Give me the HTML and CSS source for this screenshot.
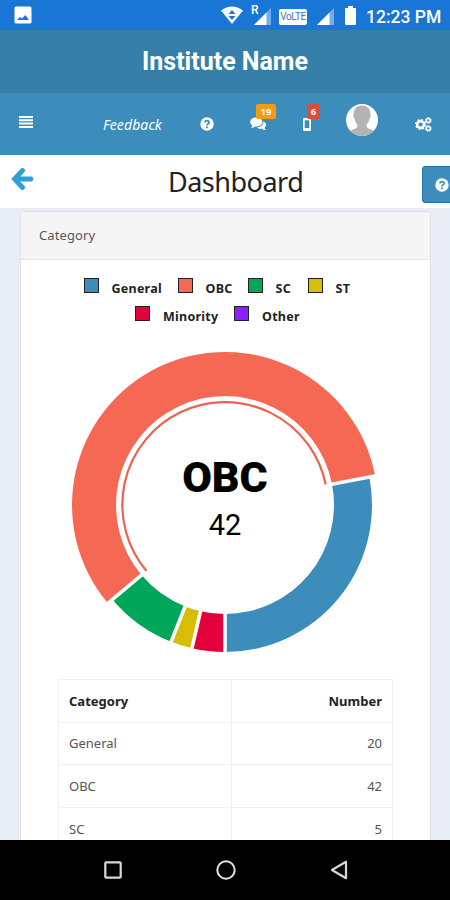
FILE: index.html
```html
<!DOCTYPE html>
<html lang="en">
<head>
    <meta charset="UTF-8">
    <meta name="viewport" content="width=device-width, initial-scale=1.0">
    <title>Dashboard</title>
    <link rel="stylesheet" href="styles.css">
</head>
<body>
    <div class="status-bar">
        <svg class="status-photo" width="18" height="18" viewBox="0 0 18 18">
            <rect x="0.5" y="0.5" width="17" height="17" rx="1.5" fill="#fff"/>
            <path d="M3 14l3-3 2 1.500L11.500 9 15 14z" fill="#1976d2"/>
        </svg>
        <svg class="status-wifi" width="22" height="18" viewBox="0 0 22 18">
            <path d="M0 4.500Q11-3.500 22 4.500L11 18z" fill="#fff"/>
            <path d="M11 4l3.500 4h-7zM11 14l-3.500-4h7z" fill="#1976d2"/>
        </svg>
        <div class="roaming">
            <span class="roaming-letter">R</span>
            <svg width="17" height="17" viewBox="0 0 17 17">
                <path d="M17 0v17H0z" fill="#75acec"/>
                <path d="M12.500 4.500V17H0z" fill="#fff"/>
            </svg>
        </div>
        <span class="volte">VoLTE</span>
        <svg class="status-signal" width="17" height="17" viewBox="0 0 17 17">
            <path d="M17 0v17H0z" fill="#75acec"/>
            <path d="M12.500 4.500V17H0z" fill="#fff"/>
        </svg>
        <svg class="status-battery" width="11" height="19" viewBox="0 0 11 19">
            <path d="M3 0h5v2h2q1 0 1 1v15q0 1-1 1H1q-1 0-1-1V3q0-1 1-1h2z" fill="#fff"/>
        </svg>
        <span class="clock">12:23 PM</span>
    </div>

    <div class="logo">Institute Name</div>

    <div class="navbar">
        <svg class="nav-menu" width="14" height="12" viewBox="0 0 14 12">
            <path d="M0 1h14M0 4.300h14M0 7.600h14M0 10.900h14" stroke="#fff" stroke-width="2"/>
        </svg>
        <span class="feedback">Feedback</span>
        <svg class="nav-help" width="14" height="14" viewBox="0 0 14 14">
            <circle cx="7" cy="7" r="6.700" fill="#fff"/>
            <path d="M5 5.500Q5 3.600 7 3.600T9 5.400Q9 6.400 7.900 7T7 8.500" fill="none" stroke="#3c8dbc" stroke-width="1.800"/>
            <rect x="6.100" y="9.500" width="1.800" height="1.700" fill="#3c8dbc"/>
        </svg>
        <div class="nav-comments">
            <svg width="17" height="14" viewBox="0 0 17 14">
                <path d="M13.500 4.500Q16.500 6 16 8.500Q15.700 10 14.500 10.800Q14.800 12.300 16 13Q13.500 13.200 12 11.700Q8.800 12.200 6.800 10.500Q13 10 13.500 4.500z" fill="#fff"/>
                <ellipse cx="6.300" cy="5" rx="6.200" ry="4.500" fill="#fff"/>
                <path d="M2.500 8Q2.300 10 .8 11Q4 11 5.500 9z" fill="#fff"/>
            </svg>
            <span class="badge badge-orange">19</span>
        </div>
        <div class="nav-phone">
            <svg width="8" height="13" viewBox="0 0 8 13">
                <rect x="0" y="0" width="8" height="13" rx="1.300" fill="#fff"/>
                <rect x="1.700" y="2.300" width="4.600" height="7.700" fill="#3c8dbc"/>
            </svg>
            <span class="badge badge-red">6</span>
        </div>
        <svg class="nav-avatar" width="32" height="32" viewBox="0 0 32 32">
            <clipPath id="round"><circle cx="16" cy="16" r="16"/></clipPath>
            <g clip-path="url(#round)">
                <rect width="32" height="32" fill="#fff"/>
                <path d="M16 1.500C10 1.500 7.500 5.500 7.700 10.500C7 10.800 7 13 8.600 15C9 18 10.500 19.500 11.500 20.500C11.500 23.500 10.500 24.500 7 25.500C4.500 26.200 3 28 2 32H30C29 28 27.500 26.200 25 25.500C21.500 24.500 20.500 23.500 20.500 20.500C21.500 19.500 23 18 23.400 15C25 13 25 10.800 24.300 10.500C24.500 5.500 22 1.500 16 1.500z" fill="#b3b3b3"/>
            </g>
        </svg>
        <svg class="nav-cogs" width="17" height="15" viewBox="0 0 17 15">
            <g fill="none" stroke="#fff">
                <circle cx="5.600" cy="7.500" r="3.400" stroke-width="2.600"/>
                <circle cx="5.600" cy="7.500" r="4.900" stroke-width="1.400" stroke-dasharray="1.925"/>
                <circle cx="13.300" cy="3.500" r="2" stroke-width="1.600"/>
                <circle cx="13.300" cy="3.500" r="2.900" stroke-width=".9" stroke-dasharray="1.140"/>
                <circle cx="13.300" cy="11.500" r="2" stroke-width="1.600"/>
                <circle cx="13.300" cy="11.500" r="2.900" stroke-width=".9" stroke-dasharray="1.140"/>
            </g>
        </svg>
    </div>

    <div class="title-bar">
        <svg class="back" width="22" height="22" viewBox="0 0 22 22">
            <path d="M11.500 2.500L3.500 11l8 8.500M4 11h16" fill="none" stroke="#2f9fd8" stroke-width="4.800" stroke-linecap="round"/>
        </svg>
        <h1>Dashboard</h1>
        <div class="help-btn">
            <svg width="14" height="14" viewBox="0 0 14 14">
                <circle cx="7" cy="7" r="6.700" fill="#fff"/>
                <path d="M5 5.500Q5 3.600 7 3.600T9 5.400Q9 6.400 7.900 7T7 8.500" fill="none" stroke="#3c8dbc" stroke-width="1.800"/>
                <rect x="6.100" y="9.500" width="1.800" height="1.700" fill="#3c8dbc"/>
            </svg>
        </div>
    </div>

    <div class="content">
        <div class="panel">
            <div class="panel-heading">Category</div>
            <div class="legend">
                <div class="legend-row">
                    <span class="swatch general"></span><span class="label w-general">General</span>
                    <span class="swatch obc"></span><span class="label w-obc">OBC</span>
                    <span class="swatch sc"></span><span class="label w-sc">SC</span>
                    <span class="swatch st"></span><span class="label w-st">ST</span>
                </div>
                <div class="legend-row">
                    <span class="swatch minority"></span><span class="label w-minority">Minority</span>
                    <span class="swatch other"></span><span class="label w-other">Other</span>
                </div>
            </div>
            <svg class="donut" width="310" height="310" viewBox="-155 -155 310 310">
                <path d="M0 147A147 147 0 0 0 144.300-28L107-20.800A109 109 0 0 1 0 109z" fill="#3c8dbc"/>
                <path d="M150.200-29.200A153 153 0 1 0-117.200 98.300L-83.500 70.100A109 109 0 1 1 107-20.800z" fill="#f56954"/>
                <path d="M-112.600 94.500A147 147 0 0 0-53.900 136.800L-39.900 101.400A109 109 0 0 1-83.500 70.100z" fill="#00a65a"/>
                <path d="M-53.900 136.800A147 147 0 0 0-33.100 143.200L-24.500 106.200A109 109 0 0 1-39.900 101.400z" fill="#d8bd06"/>
                <path d="M-33.100 143.200A147 147 0 0 0 0 147V109A109 109 0 0 1-24.500 106.200z" fill="#e4003a"/>
                <!-- gaps between the slices -->
                <path d="M0 106V155M104-20.200L152.200-29.600M-81.200 68.100L-118.700 99.600M-38.800 98.600L-56.800 144.200M-23.800 103.300L-34.900 151" stroke="#fff" stroke-width="3.600"/>
                <path d="M100.700-20.500A102.700 102.700 0 1 0-78.600 65.900" fill="none" stroke="#f0604e" stroke-width="2.200"/>
                <text class="donut-name" x="0" y="-13" text-anchor="middle">OBC</text>
                <text class="donut-value" x="0" y="30" text-anchor="middle">42</text>
            </svg>
            <table>
                <tr><th>Category</th><th>Number</th></tr>
                <tr><td>General</td><td>20</td></tr>
                <tr><td>OBC</td><td>42</td></tr>
                <tr><td>SC</td><td>5</td></tr>
            </table>
        </div>
    </div>

    <div class="android-nav">
        <svg width="18" height="18" viewBox="0 0 18 18"><rect x="1.300" y="1.300" width="15.400" height="15.400" rx="1" fill="none" stroke="#d8d8d8" stroke-width="2.200"/></svg>
        <svg width="20" height="20" viewBox="0 0 20 20"><circle cx="10" cy="10" r="8.700" fill="none" stroke="#e4e4e4" stroke-width="2"/></svg>
        <svg width="18" height="20" viewBox="0 0 18 20"><path d="M16 1.800v16.400L2 10z" fill="none" stroke="#d8d8d8" stroke-width="2.200" stroke-linejoin="round"/></svg>
    </div>
</body>
</html>
```

FILE: styles.css
```css
* {
    box-sizing: border-box;
}
body {
    margin: 0;
    width: 450px;
    height: 900px;
    overflow: hidden;
    display: flex;
    flex-direction: column;
    font-family: 'Noto Sans', sans-serif;
    font-size: 13px;
    color: #555;
    background: #e9edf5;
}
svg {
    display: block;
    flex: none;
}
.status-bar {
    flex: none;
    height: 30px;
    display: flex;
    align-items: center;
    background: #1976d6;
    color: #fff;
    font-family: Roboto, sans-serif;
}
.status-photo {
    margin-left: 14px;
}
.status-wifi {
    margin-left: 189px;
}
.roaming {
    position: relative;
    margin-left: 11px;
    padding-top: 2px;
}
.roaming-letter {
    position: absolute;
    left: -3px;
    top: -1px;
    font-size: 12px;
    line-height: 11px;
    font-weight: 500;
}
.volte {
    flex: none;
    width: 28px;
    height: 16px;
    margin-left: 8px;
    margin-top: 3px;
    border-radius: 2px;
    background: #fff;
    color: #3c78bd;
    font-size: 10px;
    line-height: 16px;
    letter-spacing: -0.4px;
    text-align: center;
}
.status-signal {
    margin-left: 10px;
    margin-top: 2px;
}
.status-battery {
    margin-left: 11px;
}
.clock {
    flex: none;
    margin-left: 10px;
    margin-top: 3px;
    font-size: 17.5px;
    font-weight: 500;
    white-space: nowrap;
}
.logo {
    flex: none;
    height: 63px;
    line-height: 63px;
    background: #367fa9;
    color: #fff;
    font-family: Roboto, sans-serif;
    font-size: 25px;
    font-weight: 700;
    text-align: center;
}
.navbar {
    flex: none;
    height: 62px;
    display: flex;
    align-items: center;
    background: #3c8dbc;
    color: #fff;
}
.nav-menu {
    margin-left: 19px;
    margin-bottom: 4px;
}
.feedback {
    width: 60px;
    margin-left: 70px;
    font-size: 14px;
    font-style: italic;
    letter-spacing: 0.1px;
    white-space: nowrap;
}
.nav-help {
    margin-left: 37px;
}
.nav-comments {
    position: relative;
    margin-left: 36px;
}
.nav-phone {
    position: relative;
    margin-left: 36px;
}
.badge {
    position: absolute;
    height: 15px;
    line-height: 15px;
    border-radius: 2px;
    color: #fff;
    font-size: 9.5px;
    font-weight: 700;
    text-align: center;
}
.badge-orange {
    left: 6px;
    top: -13px;
    width: 20px;
    background: #f39c12;
}
.badge-red {
    left: 4px;
    top: -14px;
    width: 13px;
    background: #dd4b39;
}
.nav-avatar {
    margin-left: 35px;
    margin-bottom: 8px;
}
.nav-cogs {
    margin-left: 37px;
}
.title-bar {
    flex: none;
    height: 53px;
    display: flex;
    align-items: center;
    background: #fff;
}
.back {
    margin-left: 11px;
    margin-bottom: 6px;
}
.title-bar h1 {
    flex: none;
    width: 136px;
    margin: 0 0 0 135px;
    color: #222;
    font-size: 27px;
    font-weight: 400;
    line-height: 40px;
    letter-spacing: -0.5px;
    white-space: nowrap;
}
.help-btn {
    flex: none;
    width: 40px;
    height: 37px;
    margin-left: 118px;
    margin-top: 6px;
    padding: 11px 12px;
    border: 1px solid #20729f;
    border-radius: 3px;
    background: #3c8dbc;
}
.content {
    flex: 1;
    min-height: 0;
    overflow: hidden;
    padding: 3px 19px 0 20px;
}
.panel {
    height: 700px;
    border: 1px solid #dfe1e6;
    border-radius: 4px;
    background: #fff;
}
.panel-heading {
    height: 48px;
    padding-left: 18px;
    line-height: 47px;
    letter-spacing: 0.1px;
    background: #f5f5f5;
    border-bottom: 1px solid #e3e3e3;
    border-radius: 4px 4px 0 0;
}
.legend {
    padding: 18px 16px 0 0;
}
.legend-row {
    height: 28px;
    display: flex;
    justify-content: center;
    color: #222;
    font-size: 12.5px;
    font-weight: 700;
    letter-spacing: 0.25px;
}
.swatch {
    width: 15px;
    height: 15px;
    margin-right: 13px;
    border: 1px solid #222;
}
.label {
    margin-right: 15px;
    line-height: 22px;
    white-space: nowrap;
}
.label:last-child {
    margin-right: 0;
}
.general { background: #3c8dbc; }
.obc { background: #f56954; }
.sc { background: #00a65a; }
.st { background: #d8bd06; }
.minority { background: #e4003a; }
.other { background: #8a1fff; }
.w-general { width: 51px; }
.w-obc { width: 27px; }
.w-sc { width: 17px; }
.w-st { width: 16px; }
.w-minority { width: 56px; }
.w-other { width: 38px; }
.donut {
    margin: 16px 0 0 49px;
}
.donut-name {
    font-family: Roboto, sans-serif;
    font-size: 43px;
    font-weight: 900;
    fill: #000;
}
.donut-value {
    font-family: Roboto, sans-serif;
    font-size: 29px;
    fill: #000;
}
table {
    width: 335px;
    margin: 19px 0 0 37px;
    border-collapse: collapse;
    table-layout: fixed;
}
th, td {
    height: 42.600px;
    padding: 0 10px;
    border: 1px solid #f1f1f1;
    text-align: left;
}
th {
    color: #222;
}
th:last-child, td:last-child {
    width: 161px;
    text-align: right;
}
.android-nav {
    flex: none;
    height: 60px;
    padding-left: 1px;
    display: flex;
    align-items: center;
    justify-content: center;
    gap: 94px;
    background: #000;
}
```
